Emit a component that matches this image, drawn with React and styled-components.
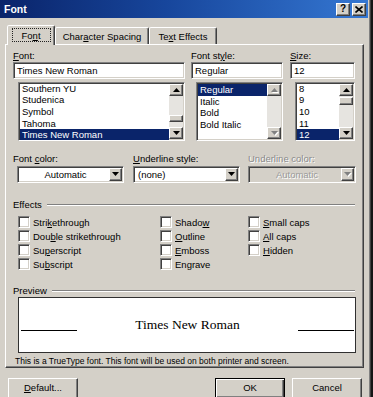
import React from "react";
import styled, { createGlobalStyle, css } from "styled-components";

const GlobalStyle = createGlobalStyle`
  html, body {
    margin: 0;
    padding: 0;
    background: #161616;
  }
  body {
    font-family: "Liberation Sans", Arial, sans-serif;
    font-size: 9.5px;
    color: #000;
  }
  #root {
    width: 373px;
    height: 397px;
    overflow: hidden;
  }
`;

const sunken = css`
  box-sizing: border-box;
  border: 1px solid;
  border-color: #808080 #ffffff #ffffff #808080;
  box-shadow: inset 1px 1px 0 #404040, inset -1px -1px 0 #d4d0c8;
  padding: 1px;
`;

const raised = css`
  box-sizing: border-box;
  border: 1px solid;
  border-color: #ffffff #404040 #404040 #ffffff;
  box-shadow: inset -1px -1px 0 #808080;
  background: #d4d0c8;
`;

const Window = styled.div`
  width: 371px;
  height: 397px;
  box-sizing: border-box;
  background: #d4d0c8;
  border-right: 1px solid #404040;
  box-shadow: inset -1px 0 0 #808080;
  padding-right: 2px;
  display: flex;
  flex-direction: column;
  overflow: hidden;
`;

const TitleBar = styled.div`
  height: 18px;
  flex: none;
  display: flex;
  align-items: center;
  justify-content: space-between;
  padding: 0 2px 0 4px;
  background: linear-gradient(90deg, #0a246a 0%, #17469c 45%, #3577d2 100%);
`;

const Title = styled.span`
  color: #fff;
  font-weight: bold;
  font-size: 10.5px;
`;

const CaptionButtons = styled.div`
  display: flex;
  gap: 2px;
`;

const CaptionButton = styled.div`
  ${raised};
  width: 14px;
  height: 13px;
  display: flex;
  align-items: center;
  justify-content: center;
  font-weight: bold;
  font-size: 10px;
  line-height: 1;
`;

const TabStrip = styled.div`
  margin-top: 7px;
  height: 19px;
  padding-left: 7px;
  display: flex;
  align-items: flex-end;
  position: relative;
  z-index: 1;
`;

const Tab = styled.div`
  box-sizing: border-box;
  width: ${(p) => p.$w}px;
  height: ${(p) => (p.$active ? 20 : 17)}px;
  margin-bottom: ${(p) => (p.$active ? -1 : 0)}px;
  border: 1px solid;
  border-bottom: none;
  border-color: #fff #404040 transparent #fff;
  box-shadow: inset -1px 0 0 #808080;
  border-radius: 2px 2px 0 0;
  background: #d4d0c8;
  display: flex;
  align-items: center;
  justify-content: center;
  white-space: nowrap;
`;

const FocusRing = styled.span`
  box-sizing: border-box;
  width: calc(100% - 7px);
  height: calc(100% - 5px);
  margin-top: -1px;
  border: 1px dotted #222;
  display: flex;
  align-items: center;
  justify-content: center;
`;

const Panel = styled.div`
  margin-left: 5px;
  width: 359px;
  height: 324px;
  flex: none;
  box-sizing: border-box;
  border: 1px solid;
  border-color: #fff #404040 #404040 #fff;
  box-shadow: inset -1px -1px 0 #808080;
  padding: 5px 7px 0 7px;
  display: flex;
  flex-direction: column;
`;

const FieldGrid = styled.div`
  display: grid;
  grid-template-columns: ${(p) => p.$cols};
  margin-top: ${(p) => p.$top || 0}px;
`;

const Field = styled.div`
  display: flex;
  flex-direction: column;
`;

const Label = styled.div`
  height: 12px;
  line-height: 12px;
  white-space: nowrap;
  ${(p) =>
    p.$disabled &&
    css`
      color: #8a8a8a;
      text-shadow: 1px 1px 0 #fff;
    `}
`;

const Mn = styled.u`
  text-decoration: underline;
  text-underline-offset: 1px;
`;

const TextBox = styled.div`
  ${sunken};
  width: ${(p) => p.$w}px;
  height: 17px;
  background: #fff;
  padding: 0 3px;
  display: flex;
  align-items: center;
`;

const ListBox = styled.div`
  ${sunken};
  width: ${(p) => p.$w}px;
  height: 59px;
  margin: 3px 0 0 5px;
  background: #fff;
  display: flex;
  overflow: hidden;
`;

const ListItems = styled.div`
  flex: 1;
  margin-top: ${(p) => p.$scroll || 0}px;
  display: flex;
  flex-direction: column;
`;

const ListItem = styled.div`
  height: 11.7px;
  line-height: 11.7px;
  padding-left: 2px;
  white-space: nowrap;
  flex: none;
  ${(p) =>
    p.$selected &&
    css`
      background: #0a246a;
      color: #fff;
    `}
`;

const ScrollBar = styled.div`
  width: 14px;
  flex: none;
  display: flex;
  flex-direction: column;
  background: #e6e4e0;
`;

const ScrollButton = styled.div`
  ${raised};
  height: 12px;
  flex: none;
  display: flex;
  align-items: center;
  justify-content: center;
`;

const ScrollTrack = styled.div`
  flex: 1;
  display: flex;
  flex-direction: column;
`;

const ScrollThumb = styled.div`
  ${raised};
  height: ${(p) => p.$h}px;
  margin-top: ${(p) => p.$offset}px;
`;

const Combo = styled.div`
  ${sunken};
  width: ${(p) => p.$w}px;
  margin-left: ${(p) => p.$indent || 0}px;
  margin-top: 1px;
  height: 17px;
  background: ${(p) => (p.$disabled ? "#d4d0c8" : "#fff")};
  display: flex;
  align-items: stretch;
`;

const ComboText = styled.div`
  flex: 1;
  display: flex;
  align-items: center;
  justify-content: ${(p) => (p.$center ? "center" : "flex-start")};
  padding-left: 3px;
  ${(p) =>
    p.$disabled &&
    css`
      color: #9a9a9a;
      text-shadow: 1px 1px 0 #fff;
    `}
`;

const ComboButton = styled.div`
  ${raised};
  width: 13px;
  display: flex;
  align-items: center;
  justify-content: center;
`;

const GroupHeader = styled.div`
  margin-top: ${(p) => p.$top}px;
  height: 12px;
  line-height: 12px;
  display: flex;
  align-items: center;
  gap: 5px;
  padding-right: 1px;
  &::after {
    content: "";
    flex: 1;
    height: 0;
    border-top: 1px solid #808080;
    border-bottom: 1px solid #fff;
  }
`;

const CheckGrid = styled.div`
  margin-top: 4px;
  padding-left: 5px;
  display: grid;
  grid-template-columns: 142px 88px auto;
  grid-template-rows: repeat(4, 14px);
  grid-auto-flow: column;
`;

const CheckRow = styled.label`
  display: flex;
  align-items: center;
  gap: 3px;
  white-space: nowrap;
`;

const CheckBox = styled.span`
  ${sunken};
  width: 12px;
  height: 12px;
  background: #fff;
  flex: none;
`;

const PreviewBox = styled.div`
  margin-left: 5px;
  width: 338px;
  height: 56px;
  box-sizing: border-box;
  border: 1px solid #303030;
  background: #fff;
  display: flex;
  align-items: center;
  padding: 0 1px 0 2px;
`;

const PreviewRule = styled.div`
  width: 56px;
  height: 0;
  margin-top: 10px;
  border-top: 1px solid #000;
`;

const PreviewText = styled.div`
  flex: 1;
  text-align: center;
  font-family: "Liberation Serif", "Times New Roman", serif;
  font-size: 13.5px;
`;

const Note = styled.div`
  margin: 2px 0 0 2px;
  height: 12px;
  line-height: 12px;
  font-size: 8.5px;
  white-space: nowrap;
`;

const ButtonRow = styled.div`
  margin-top: 10px;
  padding: 0 6px 0 8px;
  display: flex;
  gap: 7px;
`;

const PushButton = styled.div`
  ${raised};
  width: 70px;
  height: 21px;
  padding-bottom: 2px;
  display: flex;
  align-items: center;
  justify-content: center;
  margin-left: ${(p) => (p.$push ? "auto" : "0")};
  ${(p) =>
    p.$default &&
    css`
      border-color: #000;
      box-shadow: inset 1px 1px 0 #fff, inset -1px -1px 0 #404040, inset -2px -2px 0 #808080;
    `}
`;

function Arrow({ dir = "down", disabled }) {
  const points = dir === "up" ? "0,4 3.5,0 7,4" : "0,0 7,0 3.5,4";
  return (
    <svg width="7" height="5" viewBox="0 0 7 5" style={{ overflow: "visible" }}>
      {disabled && <polygon points={points} fill="#fff" transform="translate(1,1)" />}
      <polygon points={points} fill={disabled ? "#808080" : "#000"} />
    </svg>
  );
}

function CloseGlyph() {
  return (
    <svg width="8" height="7" viewBox="0 0 8 7">
      <path d="M0.5 0.5 L7.5 6.5 M7.5 0.5 L0.5 6.5" stroke="#000" strokeWidth="1.6" />
    </svg>
  );
}

function List({ w, items, selected, scroll, thumb, disabled }) {
  return (
    <ListBox $w={w}>
      <ListItems $scroll={scroll}>
        {items.map((it) => (
          <ListItem key={it} $selected={it === selected}>
            {it}
          </ListItem>
        ))}
      </ListItems>
      <ScrollBar>
        <ScrollButton>
          <Arrow dir="up" disabled={disabled} />
        </ScrollButton>
        <ScrollTrack>
          {thumb && <ScrollThumb $h={thumb.h} $offset={thumb.offset} />}
        </ScrollTrack>
        <ScrollButton>
          <Arrow dir="down" disabled={disabled} />
        </ScrollButton>
      </ScrollBar>
    </ListBox>
  );
}

const effects = [
  <>Stri<Mn>k</Mn>ethrough</>,
  <>Dou<Mn>b</Mn>le strikethrough</>,
  <>Su<Mn>p</Mn>erscript</>,
  <>Su<Mn>b</Mn>script</>,
  <>Shado<Mn>w</Mn></>,
  <><Mn>O</Mn>utline</>,
  <><Mn>E</Mn>mboss</>,
  <>En<Mn>g</Mn>rave</>,
  <><Mn>S</Mn>mall caps</>,
  <><Mn>A</Mn>ll caps</>,
  <><Mn>H</Mn>idden</>,
];

export default function App() {
  return (
    <>
      <GlobalStyle />
      <Window>
        <TitleBar>
          <Title>Font</Title>
          <CaptionButtons>
            <CaptionButton>?</CaptionButton>
            <CaptionButton>
              <CloseGlyph />
            </CaptionButton>
          </CaptionButtons>
        </TitleBar>

        <TabStrip>
          <Tab $w={48} $active>
            <FocusRing>
              Fo<Mn>n</Mn>t
            </FocusRing>
          </Tab>
          <Tab $w={94}>
            Char<Mn>a</Mn>cter Spacing
          </Tab>
          <Tab $w={68}>
            Te<Mn>x</Mn>t Effects
          </Tab>
        </TabStrip>

        <Panel>
          <FieldGrid $cols="178px 99px 66px">
            <Field>
              <Label>
                <Mn>F</Mn>ont:
              </Label>
              <TextBox $w={172}>Times New Roman</TextBox>
              <List
                w={167}
                items={["Southern YU", "Studenica", "Symbol", "Tahoma", "Times New Roman"]}
                selected="Times New Roman"
                scroll={-1.5}
                thumb={{ h: 7, offset: 19 }}
              />
            </Field>
            <Field>
              <Label>
                Font st<Mn>y</Mn>le:
              </Label>
              <TextBox $w={92}>Regular</TextBox>
              <List
                w={87}
                items={["Regular", "Italic", "Bold", "Bold Italic"]}
                selected="Regular"
                disabled
              />
            </Field>
            <Field>
              <Label>
                <Mn>S</Mn>ize:
              </Label>
              <TextBox $w={65}>12</TextBox>
              <List
                w={60}
                items={["8", "9", "10", "11", "12"]}
                selected="12"
                scroll={-1.5}
                thumb={{ h: 8, offset: 1 }}
              />
            </Field>
          </FieldGrid>

          <FieldGrid $cols="120px 115px 108px" $top={12}>
            <Field>
              <Label>
                Font <Mn>c</Mn>olor:
              </Label>
              <Combo $w={107} $indent={4}>
                <ComboText $center>Automatic</ComboText>
                <ComboButton>
                  <Arrow />
                </ComboButton>
              </Combo>
            </Field>
            <Field>
              <Label>
                <Mn>U</Mn>nderline style:
              </Label>
              <Combo $w={107}>
                <ComboText>(none)</ComboText>
                <ComboButton>
                  <Arrow />
                </ComboButton>
              </Combo>
            </Field>
            <Field>
              <Label $disabled>Underline color:</Label>
              <Combo $w={108} $disabled>
                <ComboText $center $disabled>
                  Automatic
                </ComboText>
                <ComboButton>
                  <Arrow disabled />
                </ComboButton>
              </Combo>
            </Field>
          </FieldGrid>

          <GroupHeader $top={16}>Effects</GroupHeader>
          <CheckGrid>
            {effects.map((label, i) => (
              <CheckRow key={i}>
                <CheckBox />
                <span>{label}</span>
              </CheckRow>
            ))}
          </CheckGrid>

          <GroupHeader $top={14}>Preview</GroupHeader>
          <PreviewBox>
            <PreviewRule />
            <PreviewText>Times New Roman</PreviewText>
            <PreviewRule />
          </PreviewBox>
          <Note>This is a TrueType font. This font will be used on both printer and screen.</Note>
        </Panel>

        <ButtonRow>
          <PushButton>
            <span>
              <Mn>D</Mn>efault...
            </span>
          </PushButton>
          <PushButton $push $default>
            OK
          </PushButton>
          <PushButton>Cancel</PushButton>
        </ButtonRow>
      </Window>
    </>
  );
}
